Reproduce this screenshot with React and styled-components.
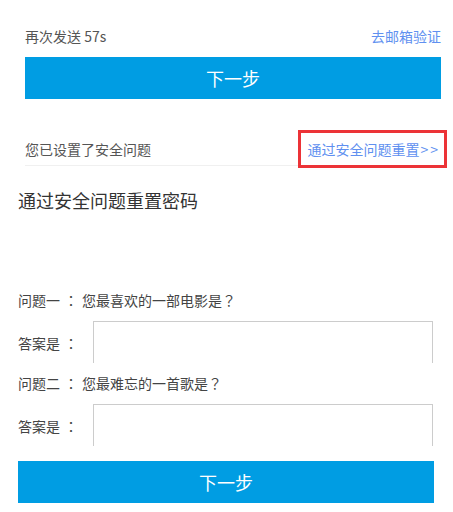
import React from "react";
import styled, { createGlobalStyle } from "styled-components";

const GlobalStyle = createGlobalStyle`
  body {
    margin: 0;
    background: #fff;
    font-family: "Noto Sans CJK SC", "Noto Sans", sans-serif;
  }
`;

function App() {
  return (
    <Page>
      <GlobalStyle />
      <TopSection>
        <ResendRow>
          <MutedText>再次发送 57s</MutedText>
          <BlueLink>去邮箱验证</BlueLink>
        </ResendRow>
        <NextButton>下一步</NextButton>
        <QuestionSetRow>
          <MutedText>您已设置了安全问题</MutedText>
          <HighlightLink>
            通过安全问题重置<Arrows>&gt;&gt;</Arrows>
          </HighlightLink>
          <RedFrame />
        </QuestionSetRow>
      </TopSection>

      <ResetSection>
        <Heading>通过安全问题重置密码</Heading>
        <QuestionLine $first>
          问题一<Punct>：</Punct>您最喜欢的一部电影是<Punct $end>？</Punct>
        </QuestionLine>
        <AnswerRow>
          <AnswerLabel>
            答案是<Punct>：</Punct>
          </AnswerLabel>
          <AnswerClip>
            <AnswerInput />
          </AnswerClip>
        </AnswerRow>
        <QuestionLine>
          问题二<Punct>：</Punct>您最难忘的一首歌是<Punct $end>？</Punct>
        </QuestionLine>
        <AnswerRow>
          <AnswerLabel>
            答案是<Punct>：</Punct>
          </AnswerLabel>
          <AnswerClip>
            <AnswerInput />
          </AnswerClip>
        </AnswerRow>
        <NextButton $wide>下一步</NextButton>
      </ResetSection>
    </Page>
  );
}

const Page = styled.div`
  width: 453px;
  color: #555;
  font-size: 14px;
`;

const TopSection = styled.div`
  padding: 26px 12px 0 25px;
`;

const ResendRow = styled.div`
  display: flex;
  justify-content: space-between;
  align-items: center;
  height: 20px;
  line-height: 20px;
`;

const MutedText = styled.span`
  color: #555;
  font-size: 14px;
`;

const BlueLink = styled.a`
  color: #6090f0;
  font-size: 14px;
  text-decoration: none;
`;

const NextButton = styled.button`
  display: block;
  width: ${(p) => (p.$wide ? "416px" : "100%")};
  height: 42px;
  margin-top: ${(p) => (p.$wide ? "15px" : "11px")};
  border: 0;
  background: #009de3;
  color: #fff;
  font-family: "Noto Sans CJK SC", sans-serif;
  font-size: 18px;
  cursor: pointer;
`;

const QuestionSetRow = styled.div`
  position: relative;
  display: flex;
  justify-content: space-between;
  align-items: center;
  height: 32px;
  margin-top: 34px;
  border-bottom: 1px solid #f0f0f0;
`;

const HighlightLink = styled.a`
  display: block;
  line-height: 20px;
  margin-right: 1px;
  color: #6090f0;
  font-size: 14px;
  text-decoration: none;
`;

const Arrows = styled.span`
  letter-spacing: 2px;
  margin-left: 1px;
`;

/* annotation frame drawn over the link */
const RedFrame = styled.span`
  position: absolute;
  box-sizing: border-box;
  right: -6px;
  top: -3px;
  width: 149px;
  height: 38px;
  border: 3px solid #ec3337;
  pointer-events: none;
`;

const ResetSection = styled.div`
  padding: 21px 19px 8px 18px;
`;

const Heading = styled.div`
  color: #333;
  font-size: 18px;
  line-height: 26px;
`;

const Punct = styled.span`
  font-family: "Noto Sans CJK TC", sans-serif;
  margin: ${(p) => (p.$end ? "0" : "0 4px")};
`;

const QuestionLine = styled.div`
  margin-top: ${(p) => (p.$first ? "77px" : "10px")};
  line-height: 20px;
  color: #444;
  font-size: 14px;
`;

const AnswerRow = styled.div`
  display: flex;
  align-items: flex-start;
  margin-top: 11px;
`;

const AnswerLabel = styled.label`
  width: 75px;
  margin-top: 12px;
  line-height: 20px;
  color: #444;
  font-size: 14px;
`;

const AnswerClip = styled.div`
  width: 340px;
  height: 42px;
  overflow: hidden;
`;

const AnswerInput = styled.div`
  box-sizing: border-box;
  width: 100%;
  height: 60px;
  border: 1px solid #cccccc;
  background: #fff;
`;

export default App;
